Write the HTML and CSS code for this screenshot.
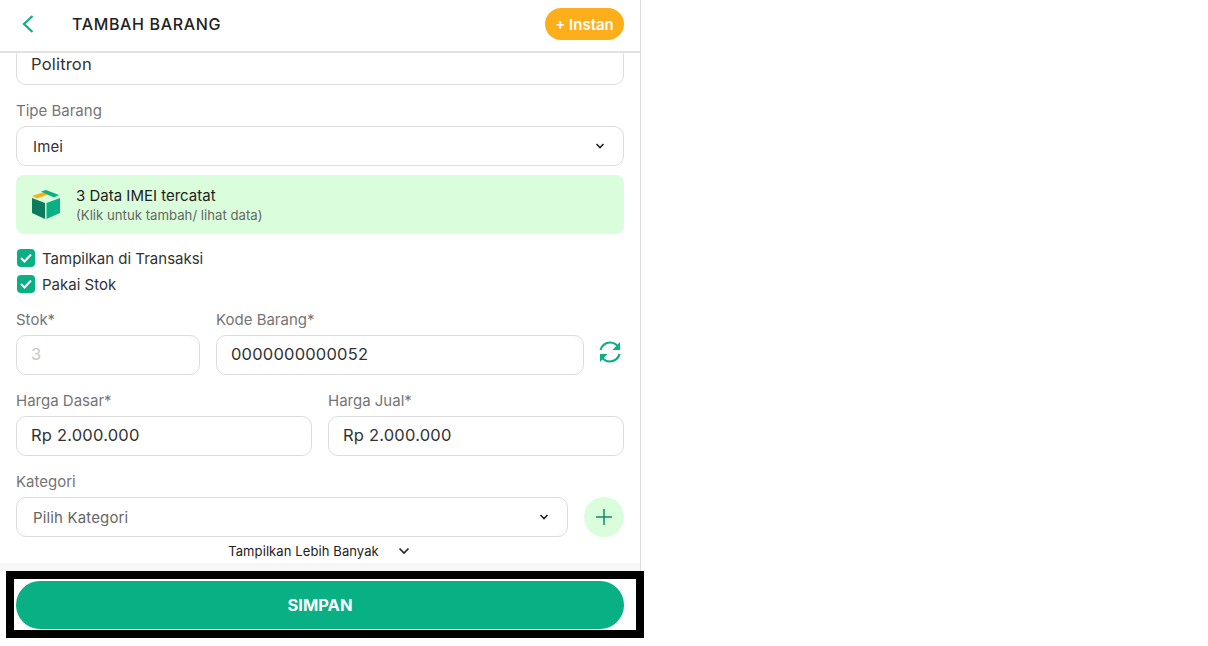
FILE: index.html
```html
<!DOCTYPE html>
<html lang="en">
<head>
  <meta charset="UTF-8">
  <title>Tambah Barang</title>
  <link rel="stylesheet" href="styles.css">
</head>
<body>
  <div class="app">
    <header class="topbar">
      <div class="topbar-left">
        <svg class="back" width="24" height="24" viewBox="0 0 24 24"><path d="M16.500 4 L8 12 L16.500 20" fill="none" stroke="#08b084" stroke-width="2.200"/></svg>
        <span class="title">TAMBAH BARANG</span>
      </div>
      <button class="btn-instan">+ Instan</button>
    </header>

    <main class="form">
      <div class="field field-cut">
        <div class="input">Politron</div>
      </div>

      <div class="field">
        <label>Tipe Barang</label>
        <div class="input select">
          <span>Imei</span>
          <svg width="10" height="8" viewBox="0 0 10 8"><path d="M1.500 2 L5 5.500 L8.500 2" fill="none" stroke="#222" stroke-width="1.600"/></svg>
        </div>
      </div>

      <div class="imei-box">
        <svg width="30" height="29" viewBox="0 0 30 29">
          <path d="M1 8 L14 13 L14 29 L1 23 Z" fill="#0b7a5e"/>
          <path d="M15.500 13 L29 8 L29 23 L15.500 29 Z" fill="#08b084"/>
          <path d="M1 6 L13 2 L18 4 L6 8.500 Z" fill="#fdae1b"/>
          <path d="M10 1.500 L15 0 L28 5 L23 7.500 Z" fill="#08b084"/>
        </svg>
        <div>
          <div class="imei-title">3 Data IMEI tercatat</div>
          <div class="imei-sub">(Klik untuk tambah/ lihat data)</div>
        </div>
      </div>

      <div class="checks">
        <div class="check-row">
          <span class="check"><svg width="14" height="12" viewBox="0 0 14 12"><path d="M2 6 L5.500 9.500 L12 2.500" fill="none" stroke="#fff" stroke-width="2"/></svg></span>
          <span>Tampilkan di Transaksi</span>
        </div>
        <div class="check-row">
          <span class="check"><svg width="14" height="12" viewBox="0 0 14 12"><path d="M2 6 L5.500 9.500 L12 2.500" fill="none" stroke="#fff" stroke-width="2"/></svg></span>
          <span>Pakai Stok</span>
        </div>
      </div>

      <div class="row row-stok">
        <div class="field col-stok">
          <label>Stok*</label>
          <div class="input disabled">3</div>
        </div>
        <div class="field col-grow">
          <label>Kode Barang*</label>
          <div class="input">0000000000052</div>
        </div>
        <svg class="refresh" width="24" height="24" viewBox="0 0 24 24" fill="none" stroke="#08b084" stroke-width="2.200">
          <path d="M1.500 10 C2.500 5.500 6.500 2.500 11 2.500 C15 2.500 18 4.500 20 8"/>
          <path d="M21 2 V10 H13.500 Z" fill="#08b084" stroke="none"/>
          <path d="M20.500 14 C19.500 18.500 15.500 21.500 11 21.500 C7 21.500 4 19.500 2 16"/>
          <path d="M1 22 V14 H8.500 Z" fill="#08b084" stroke="none"/>
        </svg>
      </div>

      <div class="row row-harga">
        <div class="field col-grow">
          <label>Harga Dasar*</label>
          <div class="input">Rp 2.000.000</div>
        </div>
        <div class="field col-grow">
          <label>Harga Jual*</label>
          <div class="input">Rp 2.000.000</div>
        </div>
      </div>

      <div class="row row-kategori">
        <div class="field col-grow">
          <label>Kategori</label>
          <div class="input select placeholder">
            <span>Pilih Kategori</span>
            <svg width="10" height="8" viewBox="0 0 10 8"><path d="M1.500 2 L5 5.500 L8.500 2" fill="none" stroke="#222" stroke-width="1.600"/></svg>
          </div>
        </div>
        <button class="btn-add">
          <svg width="18" height="18" viewBox="0 0 18 18"><path d="M9 1 V17 M1 9 H17" stroke="#0b8a68" stroke-width="1.500"/></svg>
        </button>
      </div>

      <div class="more">
        <span>Tampilkan Lebih Banyak</span>
        <svg width="12" height="8" viewBox="0 0 12 8"><path d="M1.500 1.500 L6 6 L10.500 1.500" fill="none" stroke="#222" stroke-width="1.600"/></svg>
      </div>
    </main>
    <div class="fade"></div>
  </div>

  <footer class="footer">
    <button class="btn-save">SIMPAN</button>
  </footer>
</body>
</html>
```

FILE: styles.css
```css
* {
  box-sizing: border-box;
}

body {
  margin: 0;
  font-family: 'Inter', 'Noto Sans', sans-serif;
  font-size: 15px;
  color: #333;
  background: #fff;
}

.app {
  width: 641px;
  height: 571px;
  border-right: 1px solid #ddd;
  display: flex;
  flex-direction: column;
}

.topbar {
  height: 53px;
  flex: none;
  display: flex;
  align-items: center;
  justify-content: space-between;
  padding: 0 16px 3px;
  border-bottom: 2px solid #e2e2e2;
}

.topbar-left {
  display: flex;
  align-items: center;
  gap: 32px;
}

.title {
  font-size: 16px;
  font-weight: 500;
  letter-spacing: 0.65px;
  color: #222;
}

.btn-instan {
  height: 32px;
  width: 79px;
  padding: 0;
  border: none;
  border-radius: 16px;
  background: #fdae1b;
  color: #fff;
  font: 600 15px 'Inter', sans-serif;
}

.form {
  flex: 1;
  overflow: hidden;
  padding: 0 16px;
}

.field label {
  display: block;
  height: 17px;
  line-height: 18px;
  margin-bottom: 7px;
  color: #757575;
}

.field-cut {
  margin-top: -8px;
  margin-bottom: 17px;
}

.input {
  height: 40px;
  border: 1.5px solid #ddd;
  border-radius: 10px;
  padding: 0 14px 2px;
  display: flex;
  align-items: center;
  font-size: 16.5px;
  letter-spacing: 0.2px;
  color: #333;
}

.select {
  justify-content: space-between;
  padding: 0 18px 0 16px;
  font-size: 15px;
  letter-spacing: 0.15px;
}

.placeholder {
  color: #666;
}

.disabled {
  color: #c8c8c8;
}

.imei-box {
  margin-top: 9px;
  height: 59px;
  border-radius: 8px;
  background: #dafedb;
  display: flex;
  align-items: center;
  gap: 15px;
  padding: 0 15px;
}

.imei-title {
  color: #222;
  margin-bottom: 2px;
}

.imei-sub {
  font-size: 13.2px;
  color: #666;
}

.checks {
  margin-top: 11px;
}

.check-row {
  display: flex;
  align-items: center;
  gap: 7px;
  height: 26px;
  padding-left: 1px;
  color: #333;
}

.check {
  width: 18px;
  height: 18px;
  border-radius: 4px;
  background: #08b084;
  display: flex;
  align-items: center;
  justify-content: center;
}

.row {
  display: flex;
  gap: 16px;
}

.row-stok {
  margin-top: 14px;
  align-items: flex-end;
}

.row-harga {
  margin-top: 17px;
}

.row-kategori {
  margin-top: 17px;
  align-items: flex-end;
}

.col-stok {
  width: 184px;
  flex: none;
}

.col-grow {
  flex: 1;
}

.refresh {
  flex: none;
  margin: 0 1px 11px -1px;
}

.btn-add {
  width: 40px;
  height: 40px;
  border: none;
  border-radius: 50%;
  background: #dafedb;
  display: flex;
  align-items: center;
  justify-content: center;
  padding: 0;
}

.more {
  margin: 7px 2px 0 0;
  display: flex;
  justify-content: center;
  align-items: center;
  gap: 19px;
  height: 14px;
  font-size: 13px;
  letter-spacing: 0.1px;
  color: #222;
}

.fade {
  height: 8px;
  flex: none;
  background: #f7f7f7;
}

.footer {
  width: 638px;
  height: 67px;
  margin-left: 6px;
  border: 8px solid #000;
  background: #fff;
  padding: 2px 12px 1px 2px;
}

.btn-save {
  width: 100%;
  height: 48px;
  display: block;
  border: none;
  border-radius: 24px;
  background: #08b084;
  color: #fff;
  font: 700 16.5px 'Inter', sans-serif;
}
```
